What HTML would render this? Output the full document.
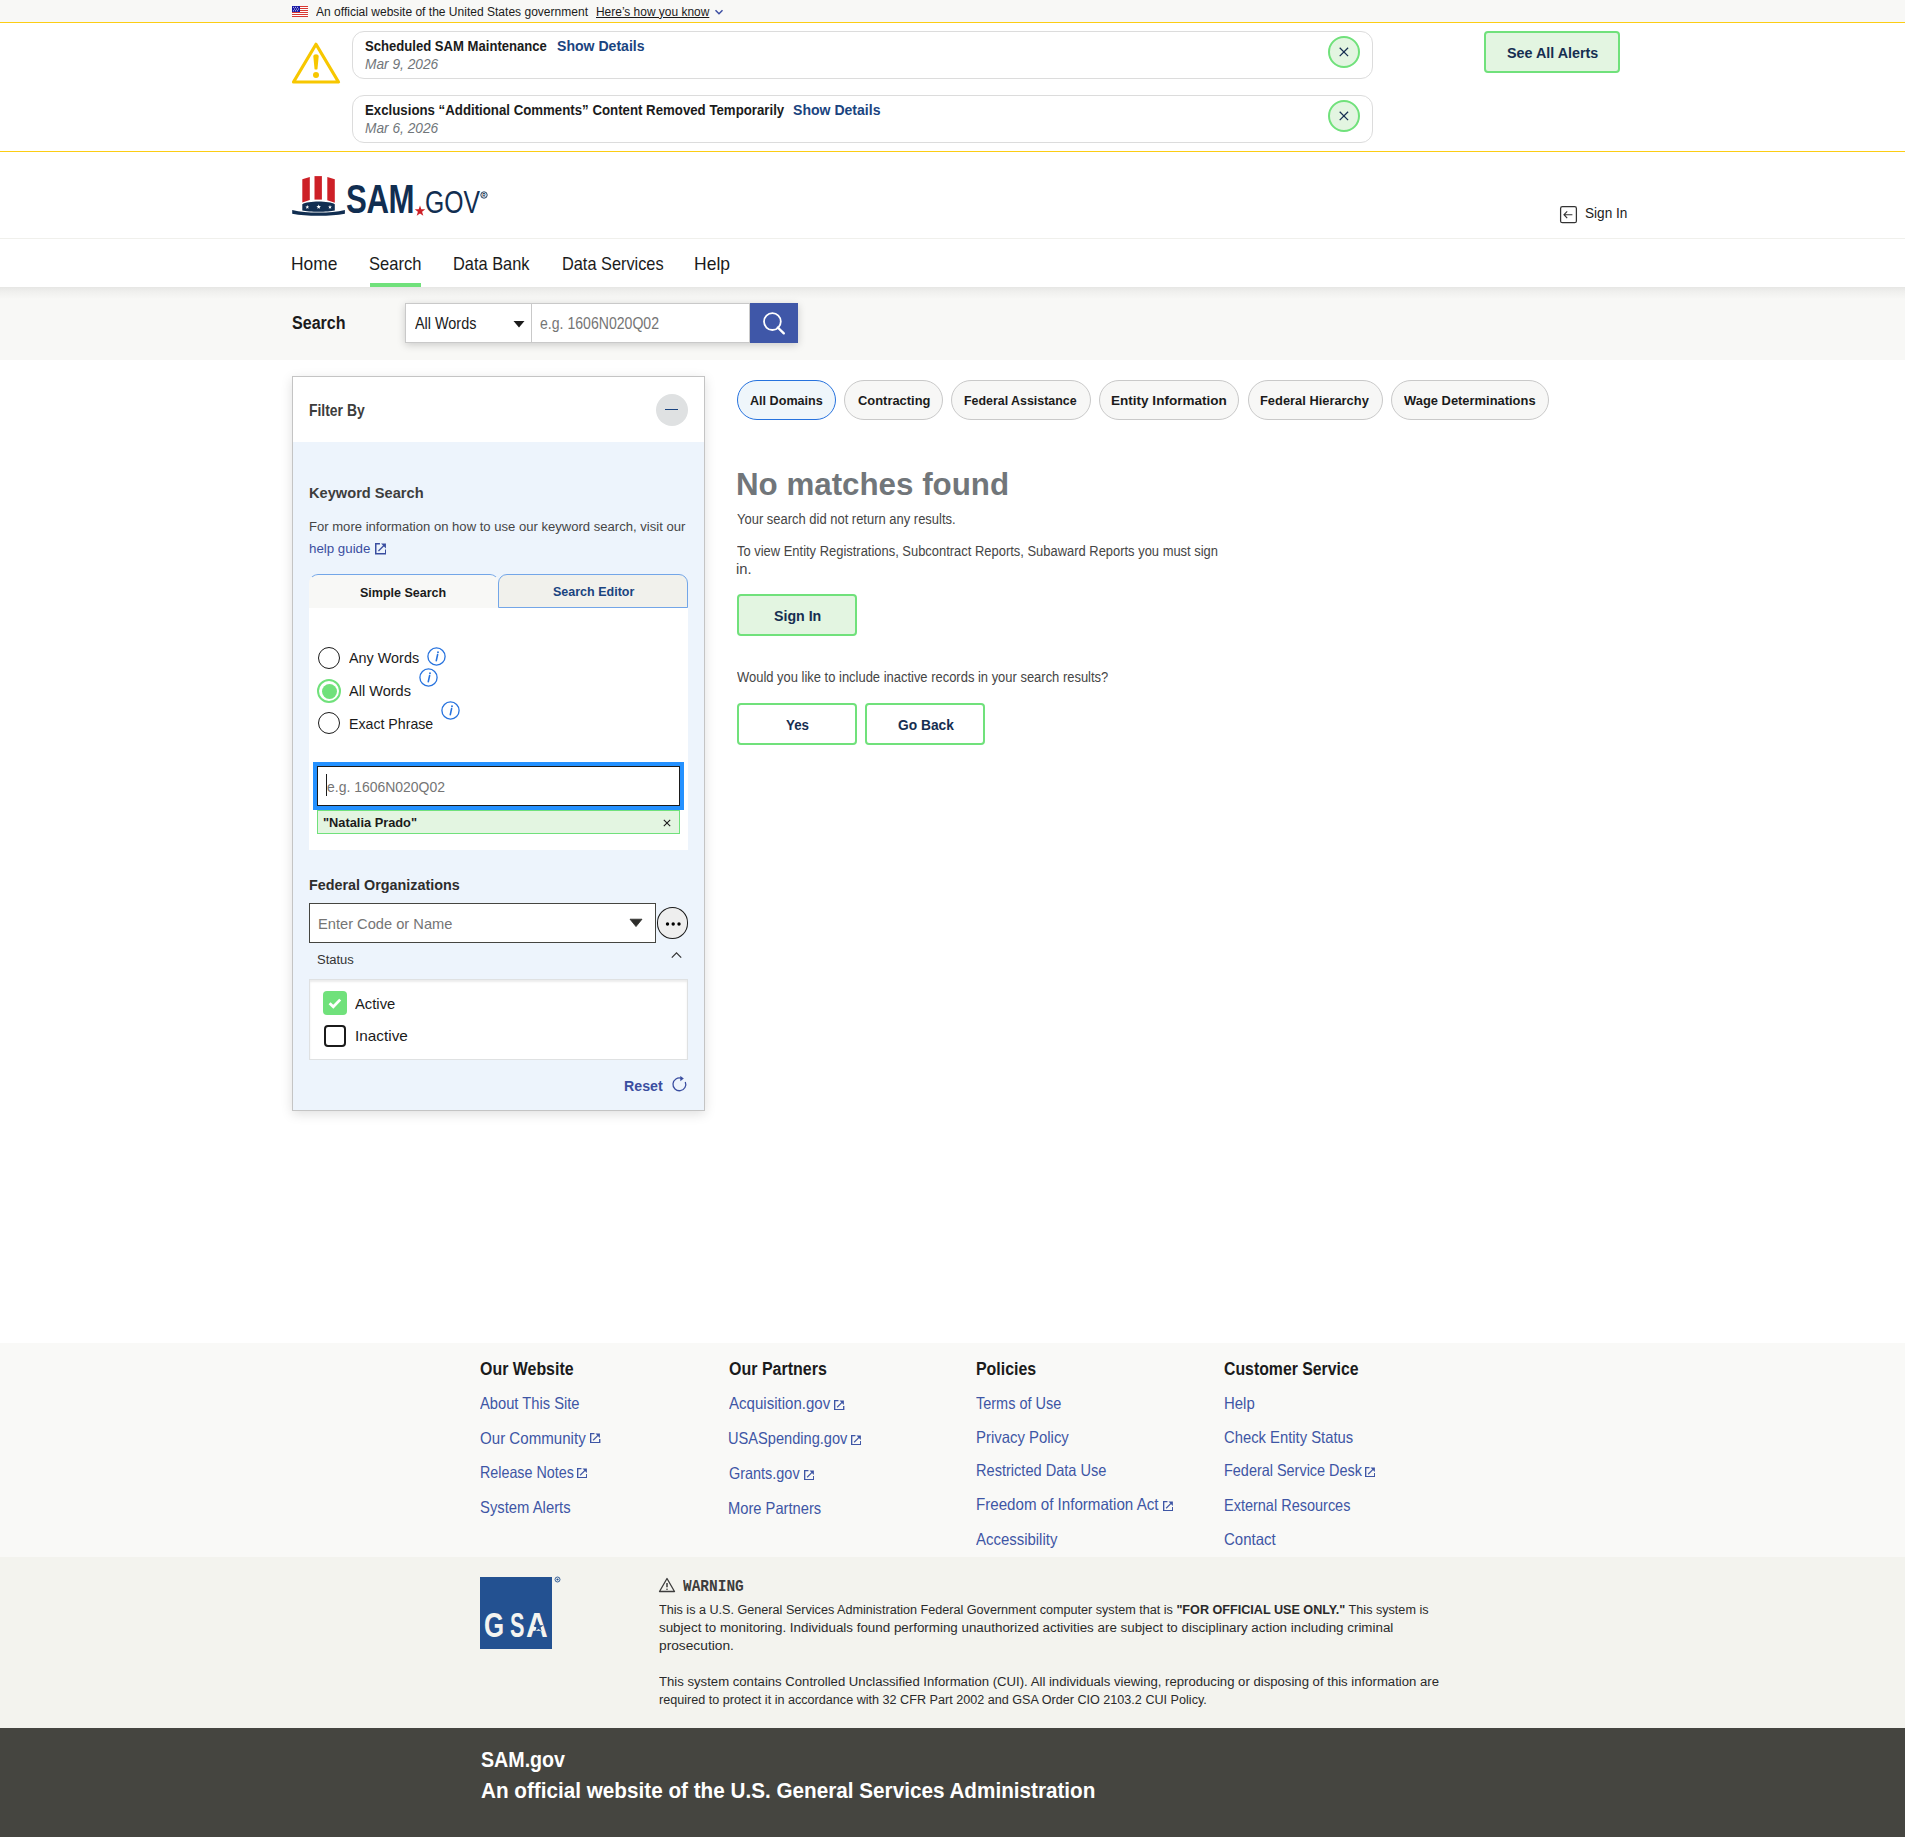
<!DOCTYPE html>
<html><head><meta charset="utf-8"><title>SAM.gov Search</title>
<style>
html,body{margin:0;padding:0;background:#fff;}
body{width:1905px;height:1837px;position:relative;overflow:hidden;font-family:"Liberation Sans",sans-serif;}
.a{position:absolute;}
.t{position:absolute;white-space:nowrap;transform-origin:0 0;}
.t b{font-weight:700;}
</style></head><body>
<div class="a" style="left:0px;top:0px;width:1905px;height:22px;box-sizing:border-box;background:#f8f8f6"></div>
<div class="a" style="left:0px;top:22px;width:1905px;height:1px;box-sizing:border-box;background:#fccd14"></div>
<div class="a" style="left:0px;top:151px;width:1905px;height:1px;box-sizing:border-box;background:#fccd14"></div>
<svg class="a" style="left:292px;top:6px" width="16" height="11" viewBox="0 0 16 11"><rect width="16" height="11" fill="#fff"/><rect y="0" width="16" height="1" fill="#d83933"/><rect y="2" width="16" height="1" fill="#d83933"/><rect y="4" width="16" height="1" fill="#d83933"/><rect y="6" width="16" height="1" fill="#d83933"/><rect y="8" width="16" height="1" fill="#d83933"/><rect y="10" width="16" height="1" fill="#d83933"/><rect width="8" height="6" fill="#1a1aa6"/><g fill="#fff"><circle cx="1.5" cy="1.3" r=".5"/><circle cx="3.5" cy="1.3" r=".5"/><circle cx="5.5" cy="1.3" r=".5"/><circle cx="2.5" cy="3" r=".5"/><circle cx="4.5" cy="3" r=".5"/><circle cx="6.5" cy="3" r=".5"/><circle cx="1.5" cy="4.7" r=".5"/><circle cx="3.5" cy="4.7" r=".5"/><circle cx="5.5" cy="4.7" r=".5"/></g></svg>
<svg class="a" style="left:714px;top:8px" width="10" height="8" viewBox="0 0 10 8"><path d="M1.5 2.2L5 5.7L8.5 2.2" fill="none" stroke="#3d4fa3" stroke-width="1.5"/></svg>
<svg class="a" style="left:290px;top:40px" width="52" height="46" viewBox="0 0 52 46"><path d="M26 4.3 L48.5 42 H3.5 Z" fill="none" stroke="#f7c700" stroke-width="3.2" stroke-linejoin="round"/><path d="M23.3 16.3 C23.3 13.4 28.7 13.4 28.7 16.3 L27.5 28.7 C27.4 29.9 24.6 29.9 24.5 28.7 Z" fill="#f7c700"/><circle cx="26" cy="35" r="3" fill="#f7c700"/></svg>
<div class="a" style="left:352px;top:31px;width:1021px;height:48px;box-sizing:border-box;border:1px solid #dcdcdc;border-radius:12px;background:#fff"></div>
<div class="a" style="left:352px;top:95px;width:1021px;height:48px;box-sizing:border-box;border:1px solid #dcdcdc;border-radius:12px;background:#fff"></div>
<div class="a" style="left:1328px;top:35.7px;width:28px;height:28px;border:2px solid #70e17b;border-radius:50%;background:#e3f5e1"></div><svg class="a" style="left:1338px;top:45.7px" width="12" height="12" viewBox="0 0 12 12"><path d="M1.7 1.7L10.1 10.1M10.1 1.7L1.7 10.1" stroke="#162e51" stroke-width="1.25"/></svg>
<div class="a" style="left:1328px;top:99.7px;width:28px;height:28px;border:2px solid #70e17b;border-radius:50%;background:#e3f5e1"></div><svg class="a" style="left:1338px;top:109.7px" width="12" height="12" viewBox="0 0 12 12"><path d="M1.7 1.7L10.1 10.1M10.1 1.7L1.7 10.1" stroke="#162e51" stroke-width="1.25"/></svg>
<div class="a" style="left:1484px;top:31px;width:136px;height:42px;box-sizing:border-box;border:2px solid #70e17b;border-radius:4px;background:#e3f5e1"></div>
<svg class="a" style="left:288px;top:172px" width="62" height="48" viewBox="288 172 62 48"><path d="M302.3 179.2 L309.8 176.9 L309.8 200 L302.3 202.5 Z" fill="#cd2027"/><path d="M314.5 176.1 H321.9 V199.6 H314.5 Z" fill="#cd2027"/><path d="M327.3 177.1 L334.8 179.2 L334.8 202.8 L327.3 200.2 Z" fill="#cd2027"/><path d="M302.3 210.5 V204.2 C308 200.6 329 200.6 334.8 204.2 V210.5 C328 212.2 309 212.2 302.3 210.5 Z" fill="#112e51"/><path d="M292.2 209.9 C300 211.6 308 212.6 318.5 212.6 C329 212.6 337 211.6 344.9 209.9 V213.7 C337 215 329 215.8 318.5 215.8 C308 215.8 300 215 292.2 213.7 Z" fill="#112e51"/><g fill="#fff"><path d="M307.30 205.00 L307.82 206.39 L309.30 206.45 L308.14 207.37 L308.53 208.80 L307.30 207.98 L306.07 208.80 L306.46 207.37 L305.30 206.45 L306.78 206.39 Z"/><path d="M318.70 204.50 L319.29 206.08 L320.98 206.16 L319.66 207.21 L320.11 208.84 L318.70 207.91 L317.29 208.84 L317.74 207.21 L316.42 206.16 L318.11 206.08 Z"/><path d="M330.00 205.00 L330.52 206.39 L332.00 206.45 L330.84 207.37 L331.23 208.80 L330.00 207.98 L328.77 208.80 L329.16 207.37 L328.00 206.45 L329.48 206.39 Z"/></g></svg>
<div class="a" style="left:346px;top:179px;font:700 40px/40px 'Liberation Sans',sans-serif;color:#112e51;transform-origin:0 0;transform:scaleX(0.78);letter-spacing:-0.5px">SAM</div>
<svg class="a" style="left:414px;top:205px" width="12" height="12" viewBox="0 0 12 12"><path d="M6 0.5 L7.3 4.3 L11.3 4.3 L8.1 6.8 L9.3 10.8 L6 8.4 L2.7 10.8 L3.9 6.8 L0.7 4.3 L4.7 4.3 Z" fill="#cd2027"/></svg>
<div class="a" style="left:425px;top:187px;font:400 31.3px/31.3px 'Liberation Sans',sans-serif;color:#112e51;transform-origin:0 0;transform:scaleX(0.79)">GOV</div>
<svg class="a" style="left:479.5px;top:191px" width="8" height="8" viewBox="0 0 8 8"><circle cx="4" cy="4" r="3.2" fill="none" stroke="#112e51" stroke-width="0.9"/><text x="4" y="5.6" font-size="4.6" text-anchor="middle" font-family="Liberation Sans" font-weight="700" fill="#112e51">R</text></svg>
<svg class="a" style="left:1559px;top:205px" width="19" height="19" viewBox="0 0 19 19"><rect x="1.6" y="1.7" width="15.8" height="16" rx="1.8" fill="none" stroke="#333" stroke-width="1.25"/><path d="M13.4 9.7 H5.2 M8.2 6.3 L5 9.7 L8.2 13.1" fill="none" stroke="#333" stroke-width="1.15"/></svg>
<div class="a" style="left:0px;top:238px;width:1905px;height:1px;box-sizing:border-box;background:#f0f0ec"></div>
<div class="a" style="left:370px;top:283px;width:51px;height:4px;box-sizing:border-box;background:#70e17b"></div>
<div class="a" style="left:0px;top:287px;width:1905px;height:73px;box-sizing:border-box;background:#f8f8f6"></div>
<div class="a" style="left:0px;top:287px;width:1905px;height:12px;box-sizing:border-box;background:linear-gradient(#e6e6e4,#efefed 35%,#f8f8f6)"></div>
<div class="a" style="left:405px;top:303px;width:393px;height:40px;box-sizing:border-box;box-shadow:0 2px 8px rgba(0,0,0,0.18)"></div>
<div class="a" style="left:405px;top:303px;width:127px;height:40px;box-sizing:border-box;background:#fff;border:1px solid #c9c9c9"></div>
<svg class="a" style="left:513px;top:320px" width="12" height="8" viewBox="0 0 12 8"><path d="M0.5 1 H11.5 L6 7.5 Z" fill="#1b1b1b"/></svg>
<div class="a" style="left:532px;top:303px;width:218px;height:40px;box-sizing:border-box;background:#fff;border:1px solid #c9c9c9;border-left:0"></div>
<div class="a" style="left:750px;top:303px;width:48px;height:40px;box-sizing:border-box;background:#3f57a8"></div>
<svg class="a" style="left:760px;top:310px" width="28" height="28" viewBox="760 310 28 28"><circle cx="772.4" cy="321.6" r="8.4" fill="none" stroke="#fff" stroke-width="1.8"/><path d="M777.8 327.5 L783.8 333.3" stroke="#fff" stroke-width="2.4" stroke-linecap="round"/></svg>
<div class="a" style="left:292px;top:376px;width:413px;height:735px;box-sizing:border-box;border:1px solid #c4c4c4;box-shadow:0 3px 11px rgba(0,0,0,0.13);background:#edf4fc"></div>
<div class="a" style="left:293px;top:377px;width:411px;height:65px;box-sizing:border-box;background:#fff"></div>
<div class="a" style="left:655.5px;top:393.5px;width:32.0px;height:32.0px;box-sizing:border-box;background:#dfe1e2;border-radius:50%"></div>
<div class="a" style="left:665px;top:408.8px;width:13px;height:1.3000000000000114px;box-sizing:border-box;background:#1a4480"></div>
<svg class="a" style="left:374.8px;top:543.2px" width="11.5" height="11.5" viewBox="0 0 10 10"><path d="M4.3 0.65 H0.65 V9.35 H9.35 V5.7" fill="none" stroke="#3a4ea0" stroke-width="1.3"/><path d="M3 7 L8.2 1.8" stroke="#3a4ea0" stroke-width="1.1"/><path d="M5.3 0.5 H9.5 V4.7 Z" fill="#3a4ea0"/></svg>
<div class="a" style="left:309px;top:574px;width:190px;height:34px;box-sizing:border-box;background:#f8f8f6;border:1px solid transparent;border-top-color:#73a6e8;border-bottom:0;border-radius:9px 9px 0 0"></div>
<div class="a" style="left:498px;top:574px;width:190px;height:34px;box-sizing:border-box;background:#f1f1ec;border:1px solid #73a6e8;border-radius:9px 9px 0 0"></div>
<div class="a" style="left:309px;top:608px;width:379px;height:241.5px;box-sizing:border-box;background:#fff"></div>
<div class="a" style="left:318px;top:647px;width:22px;height:22px;box-sizing:border-box;border:1.6px solid #1b1b1b;border-radius:50%;background:#fff"></div>
<div class="a" style="left:317px;top:679px;width:24px;height:24px;box-sizing:border-box;border:2.2px solid #70e17b;border-radius:50%;background:#fff"></div>
<div class="a" style="left:321.5px;top:683.5px;width:15.0px;height:15.0px;box-sizing:border-box;border-radius:50%;background:#70e17b"></div>
<div class="a" style="left:318px;top:712px;width:22px;height:22px;box-sizing:border-box;border:1.6px solid #1b1b1b;border-radius:50%;background:#fff"></div>
<svg class="a" style="left:426.6px;top:646.7px" width="19" height="19" viewBox="0 0 19 19"><circle cx="9.5" cy="9.5" r="8.6" fill="none" stroke="#2672de" stroke-width="1.3"/><path d="M10.6 7.6 L9.3 13.6" stroke="#2672de" stroke-width="1.6" stroke-linecap="round"/><circle cx="11" cy="5.2" r="0.95" fill="#2672de"/></svg>
<svg class="a" style="left:418.5px;top:667.8px" width="19" height="19" viewBox="0 0 19 19"><circle cx="9.5" cy="9.5" r="8.6" fill="none" stroke="#2672de" stroke-width="1.3"/><path d="M10.6 7.6 L9.3 13.6" stroke="#2672de" stroke-width="1.6" stroke-linecap="round"/><circle cx="11" cy="5.2" r="0.95" fill="#2672de"/></svg>
<svg class="a" style="left:440.6px;top:700.8px" width="19" height="19" viewBox="0 0 19 19"><circle cx="9.5" cy="9.5" r="8.6" fill="none" stroke="#2672de" stroke-width="1.3"/><path d="M10.6 7.6 L9.3 13.6" stroke="#2672de" stroke-width="1.6" stroke-linecap="round"/><circle cx="11" cy="5.2" r="0.95" fill="#2672de"/></svg>
<div class="a" style="left:313px;top:762px;width:371px;height:48px;box-sizing:border-box;background:#2491ff"></div>
<div class="a" style="left:317px;top:766px;width:363px;height:40px;box-sizing:border-box;background:#fff;border:1.5px solid #1b1b1b"></div>
<div class="a" style="left:326px;top:774px;width:1.3000000000000114px;height:22px;box-sizing:border-box;background:#1b1b1b"></div>
<div class="a" style="left:317px;top:810px;width:363px;height:24px;box-sizing:border-box;background:#e3f5e1;border:1px solid #70e17b"></div>
<svg class="a" style="left:661.5px;top:817.5px" width="10" height="10" viewBox="0 0 10 10"><path d="M1.8 1.8L8.2 8.2M8.2 1.8L1.8 8.2" stroke="#1b1b1b" stroke-width="1.1"/></svg>
<div class="a" style="left:309px;top:903px;width:347px;height:40px;box-sizing:border-box;background:#fff;border:1.4px solid #454540"></div>
<svg class="a" style="left:629px;top:918px" width="14" height="10" viewBox="0 0 14 10"><path d="M1 1.2 H13 L7 8.6 Z" fill="#2d2d2a" stroke="#2d2d2a" stroke-width="0.8" stroke-linejoin="round"/></svg>
<div class="a" style="left:656.5px;top:907px;width:31.5px;height:31.700000000000045px;box-sizing:border-box;background:#eee;border:1.8px solid #1b1b1b;border-radius:50%"></div>
<svg class="a" style="left:662px;top:920px" width="22" height="8" viewBox="0 0 22 8"><circle cx="5.5" cy="4" r="1.7" fill="#000"/><circle cx="11.2" cy="4" r="1.7" fill="#000"/><circle cx="17" cy="4" r="1.7" fill="#000"/></svg>
<svg class="a" style="left:670px;top:950px" width="13" height="10" viewBox="0 0 13 10"><path d="M1.8 7.7 L6.5 2.8 L11.2 7.7" fill="none" stroke="#333" stroke-width="1.2"/></svg>
<div class="a" style="left:309px;top:979px;width:379px;height:81px;box-sizing:border-box;background:#fff;border:1px solid #dfe1e2;box-shadow:inset 0 2px 2px rgba(0,0,0,0.08)"></div>
<div class="a" style="left:323px;top:991px;width:24px;height:24px;box-sizing:border-box;background:#70e17b;border-radius:4px"></div>
<svg class="a" style="left:323px;top:991px" width="24" height="24" viewBox="0 0 24 24"><path d="M6.6 12.2 L10.3 15.8 L17.2 8.6" fill="none" stroke="#fff" stroke-width="2.8"/></svg>
<div class="a" style="left:324px;top:1025px;width:22px;height:22px;box-sizing:border-box;background:#fff;border:2px solid #1b1b1b;border-radius:4px"></div>
<svg class="a" style="left:671px;top:1076px" width="18" height="18" viewBox="671 1076 18 18"><path d="M685.3 1081.9 A6.4 6.4 0 1 1 681.5 1078.3" fill="none" stroke="#3a4ea0" stroke-width="1.3"/><path d="M680.3 1075.9 L683.8 1078.6 L680.3 1081.3 Z" fill="#3a4ea0"/></svg>
<div class="a" style="left:737.2px;top:380px;width:98.5px;height:39.5px;box-sizing:border-box;background:#eff6fb;border:1.3px solid #2672de;border-radius:20px"></div>
<div class="a" style="left:844.1px;top:380px;width:98.60000000000002px;height:39.5px;box-sizing:border-box;background:#f7f7f6;border:1px solid #c9c9c9;border-radius:20px"></div>
<div class="a" style="left:951.2px;top:380px;width:139.39999999999986px;height:39.5px;box-sizing:border-box;background:#f7f7f6;border:1px solid #c9c9c9;border-radius:20px"></div>
<div class="a" style="left:1099px;top:380px;width:139.79999999999995px;height:39.5px;box-sizing:border-box;background:#f7f7f6;border:1px solid #c9c9c9;border-radius:20px"></div>
<div class="a" style="left:1247.6px;top:380px;width:135.0px;height:39.5px;box-sizing:border-box;background:#f7f7f6;border:1px solid #c9c9c9;border-radius:20px"></div>
<div class="a" style="left:1391.4px;top:380px;width:157.39999999999986px;height:39.5px;box-sizing:border-box;background:#f7f7f6;border:1px solid #c9c9c9;border-radius:20px"></div>
<div class="a" style="left:737px;top:594px;width:120px;height:42px;box-sizing:border-box;background:#e3f5e1;border:2px solid #70e17b;border-radius:4px"></div>
<div class="a" style="left:737px;top:703px;width:120px;height:42px;box-sizing:border-box;background:#fff;border:2px solid #70e17b;border-radius:4px"></div>
<div class="a" style="left:865px;top:703px;width:120px;height:42px;box-sizing:border-box;background:#fff;border:2px solid #70e17b;border-radius:4px"></div>
<div class="a" style="left:0px;top:1343px;width:1905px;height:214px;box-sizing:border-box;background:#f9f9f7"></div>
<svg class="a" style="left:590.4px;top:1433px" width="10.4" height="10.4" viewBox="0 0 10 10"><path d="M4.3 0.65 H0.65 V9.35 H9.35 V5.7" fill="none" stroke="#3e56a5" stroke-width="1.3"/><path d="M3 7 L8.2 1.8" stroke="#3e56a5" stroke-width="1.1"/><path d="M5.3 0.5 H9.5 V4.7 Z" fill="#3e56a5"/></svg>
<svg class="a" style="left:576.6px;top:1468px" width="10.4" height="10.4" viewBox="0 0 10 10"><path d="M4.3 0.65 H0.65 V9.35 H9.35 V5.7" fill="none" stroke="#3e56a5" stroke-width="1.3"/><path d="M3 7 L8.2 1.8" stroke="#3e56a5" stroke-width="1.1"/><path d="M5.3 0.5 H9.5 V4.7 Z" fill="#3e56a5"/></svg>
<svg class="a" style="left:834.4px;top:1399.9px" width="10.4" height="10.4" viewBox="0 0 10 10"><path d="M4.3 0.65 H0.65 V9.35 H9.35 V5.7" fill="none" stroke="#3e56a5" stroke-width="1.3"/><path d="M3 7 L8.2 1.8" stroke="#3e56a5" stroke-width="1.1"/><path d="M5.3 0.5 H9.5 V4.7 Z" fill="#3e56a5"/></svg>
<svg class="a" style="left:850.9px;top:1434.8px" width="10.4" height="10.4" viewBox="0 0 10 10"><path d="M4.3 0.65 H0.65 V9.35 H9.35 V5.7" fill="none" stroke="#3e56a5" stroke-width="1.3"/><path d="M3 7 L8.2 1.8" stroke="#3e56a5" stroke-width="1.1"/><path d="M5.3 0.5 H9.5 V4.7 Z" fill="#3e56a5"/></svg>
<svg class="a" style="left:803.5px;top:1469.8px" width="10.4" height="10.4" viewBox="0 0 10 10"><path d="M4.3 0.65 H0.65 V9.35 H9.35 V5.7" fill="none" stroke="#3e56a5" stroke-width="1.3"/><path d="M3 7 L8.2 1.8" stroke="#3e56a5" stroke-width="1.1"/><path d="M5.3 0.5 H9.5 V4.7 Z" fill="#3e56a5"/></svg>
<svg class="a" style="left:1162.6px;top:1500.6px" width="10.4" height="10.4" viewBox="0 0 10 10"><path d="M4.3 0.65 H0.65 V9.35 H9.35 V5.7" fill="none" stroke="#3e56a5" stroke-width="1.3"/><path d="M3 7 L8.2 1.8" stroke="#3e56a5" stroke-width="1.1"/><path d="M5.3 0.5 H9.5 V4.7 Z" fill="#3e56a5"/></svg>
<svg class="a" style="left:1364.7px;top:1467px" width="10.4" height="10.4" viewBox="0 0 10 10"><path d="M4.3 0.65 H0.65 V9.35 H9.35 V5.7" fill="none" stroke="#3e56a5" stroke-width="1.3"/><path d="M3 7 L8.2 1.8" stroke="#3e56a5" stroke-width="1.1"/><path d="M5.3 0.5 H9.5 V4.7 Z" fill="#3e56a5"/></svg>
<div class="a" style="left:0px;top:1557px;width:1905px;height:171px;box-sizing:border-box;background:#f3f3ee"></div>
<div class="a" style="left:480px;top:1577px;width:72px;height:72px;box-sizing:border-box;background:#235191"></div>
<div class="a" style="left:484px;top:1607px;font:700 35px/35px 'Liberation Sans',sans-serif;color:#f4f4f0;transform-origin:0 0;transform:scaleX(0.74)">G</div>
<div class="a" style="left:509.5px;top:1607px;font:700 35px/35px 'Liberation Sans',sans-serif;color:#f4f4f0;transform-origin:0 0;transform:scaleX(0.62)">S</div>
<div class="a" style="left:525.5px;top:1607px;font:700 35px/35px 'Liberation Sans',sans-serif;color:#f4f4f0;transform-origin:0 0;transform:scaleX(0.86)">A</div>
<svg class="a" style="left:532.5px;top:1620.5px" width="11" height="11" viewBox="0 0 10 10"><path d="M5 0.5 L6.2 3.8 L9.6 3.8 L6.9 5.9 L7.9 9.3 L5 7.2 L2.1 9.3 L3.1 5.9 L0.4 3.8 L3.8 3.8 Z" fill="#235191"/></svg>
<svg class="a" style="left:554px;top:1576px" width="7" height="7" viewBox="0 0 7 7"><circle cx="3.5" cy="3.5" r="2.5" fill="none" stroke="#235191" stroke-width="0.9"/><circle cx="3.5" cy="3.5" r="1.1" fill="#235191"/></svg>
<svg class="a" style="left:658px;top:1577px" width="18" height="16" viewBox="0 0 18 16"><path d="M9 1.5 L16.5 14.5 H1.5 Z" fill="none" stroke="#3d3d3d" stroke-width="1.3" stroke-linejoin="round"/><path d="M9 6 V10.2" stroke="#3d3d3d" stroke-width="1.5"/><circle cx="9" cy="12.3" r=".8" fill="#3d3d3d"/></svg>
<div class="a" style="left:0px;top:1728px;width:1905px;height:109px;box-sizing:border-box;background:#454540"></div>
<div class="t" id="t0" style="left:316.00px;top:4.63px;font-size:13.08px;line-height:13.08px;font-family:'Liberation Sans', sans-serif;font-weight:400;color:#1b1b1b;transform:scaleX(0.9200);">An official website of the United States government</div>
<div class="t" id="t1" style="left:595.60px;top:4.63px;font-size:13.08px;line-height:13.08px;font-family:'Liberation Sans', sans-serif;font-weight:400;color:#1b1b1b;transform:scaleX(0.9131);text-decoration:underline;text-underline-offset:1px;">Here’s how you know</div>
<div class="t" id="t2" style="left:364.60px;top:39.40px;font-size:14.53px;line-height:14.53px;font-family:'Liberation Sans', sans-serif;font-weight:700;color:#1b1b1b;transform:scaleX(0.9020);">Scheduled SAM Maintenance</div>
<div class="t" id="t3" style="left:556.60px;top:39.40px;font-size:14.53px;line-height:14.53px;font-family:'Liberation Sans', sans-serif;font-weight:700;color:#1a4480;transform:scaleX(0.9696);">Show Details</div>
<div class="t" id="t4" style="left:364.60px;top:57.30px;font-size:14.53px;line-height:14.53px;font-family:'Liberation Sans', sans-serif;font-weight:400;color:#71767a;font-style:italic;transform:scaleX(0.9449);">Mar 9, 2026</div>
<div class="t" id="t5" style="left:364.60px;top:102.70px;font-size:14.53px;line-height:14.53px;font-family:'Liberation Sans', sans-serif;font-weight:700;color:#1b1b1b;transform:scaleX(0.9124);">Exclusions “Additional Comments” Content Removed Temporarily</div>
<div class="t" id="t6" style="left:792.90px;top:102.70px;font-size:14.53px;line-height:14.53px;font-family:'Liberation Sans', sans-serif;font-weight:700;color:#1a4480;transform:scaleX(0.9685);">Show Details</div>
<div class="t" id="t7" style="left:364.60px;top:121.30px;font-size:14.53px;line-height:14.53px;font-family:'Liberation Sans', sans-serif;font-weight:400;color:#71767a;font-style:italic;transform:scaleX(0.9449);">Mar 6, 2026</div>
<div class="t" id="t8" style="left:1506.60px;top:46.00px;font-size:14.53px;line-height:14.53px;font-family:'Liberation Sans', sans-serif;font-weight:700;color:#162e51;transform:scaleX(0.9869);">See All Alerts</div>
<div class="t" id="t9" style="left:1585.00px;top:205.50px;font-size:14.53px;line-height:14.53px;font-family:'Liberation Sans', sans-serif;font-weight:400;color:#1b1b1b;transform:scaleX(0.9388);">Sign In</div>
<div class="t" id="t10" style="left:291.20px;top:255.00px;font-size:18.31px;line-height:18.31px;font-family:'Liberation Sans', sans-serif;font-weight:400;color:#1b1b1b;transform:scaleX(0.9520);">Home</div>
<div class="t" id="t11" style="left:369.00px;top:255.00px;font-size:18.31px;line-height:18.31px;font-family:'Liberation Sans', sans-serif;font-weight:400;color:#1b1b1b;transform:scaleX(0.9047);">Search</div>
<div class="t" id="t12" style="left:452.60px;top:255.00px;font-size:18.31px;line-height:18.31px;font-family:'Liberation Sans', sans-serif;font-weight:400;color:#1b1b1b;transform:scaleX(0.8954);">Data Bank</div>
<div class="t" id="t13" style="left:561.70px;top:255.00px;font-size:18.31px;line-height:18.31px;font-family:'Liberation Sans', sans-serif;font-weight:400;color:#1b1b1b;transform:scaleX(0.8921);">Data Services</div>
<div class="t" id="t14" style="left:693.50px;top:255.00px;font-size:18.31px;line-height:18.31px;font-family:'Liberation Sans', sans-serif;font-weight:400;color:#1b1b1b;transform:scaleX(0.9572);">Help</div>
<div class="t" id="t15" style="left:292.30px;top:315.24px;font-size:17.44px;line-height:17.44px;font-family:'Liberation Sans', sans-serif;font-weight:700;color:#1b1b1b;transform:scaleX(0.9220);">Search</div>
<div class="t" id="t16" style="left:414.60px;top:315.66px;font-size:15.99px;line-height:15.99px;font-family:'Liberation Sans', sans-serif;font-weight:400;color:#1b1b1b;transform:scaleX(0.9015);">All Words</div>
<div class="t" id="t17" style="left:540.20px;top:315.66px;font-size:15.99px;line-height:15.99px;font-family:'Liberation Sans', sans-serif;font-weight:400;color:#757575;transform:scaleX(0.8809);">e.g. 1606N020Q02</div>
<div class="t" id="t18" style="left:309.40px;top:402.76px;font-size:15.99px;line-height:15.99px;font-family:'Liberation Sans', sans-serif;font-weight:700;color:#3d3d3d;transform:scaleX(0.8707);">Filter By</div>
<div class="t" id="t19" style="left:309.40px;top:485.28px;font-size:15.26px;line-height:15.26px;font-family:'Liberation Sans', sans-serif;font-weight:700;color:#3d3d3d;transform:scaleX(0.9591);">Keyword Search</div>
<div class="t" id="t20" style="left:309.40px;top:519.84px;font-size:13.66px;line-height:13.66px;font-family:'Liberation Sans', sans-serif;font-weight:400;color:#454545;transform:scaleX(0.9571);">For more information on how to use our keyword search, visit our</div>
<div class="t" id="t21" style="left:309.40px;top:541.74px;font-size:13.66px;line-height:13.66px;font-family:'Liberation Sans', sans-serif;font-weight:400;color:#3a4ea0;transform:scaleX(0.9745);">help guide</div>
<div class="t" id="t22" style="left:360.20px;top:586.34px;font-size:13.66px;line-height:13.66px;font-family:'Liberation Sans', sans-serif;font-weight:700;color:#1b1b1b;transform:scaleX(0.9158);">Simple Search</div>
<div class="t" id="t23" style="left:552.50px;top:585.14px;font-size:13.66px;line-height:13.66px;font-family:'Liberation Sans', sans-serif;font-weight:700;color:#1a4480;transform:scaleX(0.9156);">Search Editor</div>
<div class="t" id="t24" style="left:349.00px;top:649.96px;font-size:15.41px;line-height:15.41px;font-family:'Liberation Sans', sans-serif;font-weight:400;color:#1b1b1b;transform:scaleX(0.9339);">Any Words</div>
<div class="t" id="t25" style="left:349.00px;top:682.86px;font-size:15.41px;line-height:15.41px;font-family:'Liberation Sans', sans-serif;font-weight:400;color:#1b1b1b;transform:scaleX(0.9445);">All Words</div>
<div class="t" id="t26" style="left:348.80px;top:715.96px;font-size:15.41px;line-height:15.41px;font-family:'Liberation Sans', sans-serif;font-weight:400;color:#1b1b1b;transform:scaleX(0.9190);">Exact Phrase</div>
<div class="t" id="t27" style="left:326.80px;top:779.72px;font-size:14.39px;line-height:14.39px;font-family:'Liberation Sans', sans-serif;font-weight:400;color:#757575;transform:scaleX(0.9712);">e.g. 1606N020Q02</div>
<div class="t" id="t28" style="left:323.40px;top:815.83px;font-size:13.08px;line-height:13.08px;font-family:'Liberation Sans', sans-serif;font-weight:700;color:#1b1b1b;transform:scaleX(0.9793);">"Natalia Prado"</div>
<div class="t" id="t29" style="left:309.00px;top:877.16px;font-size:15.41px;line-height:15.41px;font-family:'Liberation Sans', sans-serif;font-weight:700;color:#2d2d2d;transform:scaleX(0.9320);">Federal Organizations</div>
<div class="t" id="t30" style="left:318.40px;top:917.33px;font-size:14.97px;line-height:14.97px;font-family:'Liberation Sans', sans-serif;font-weight:400;color:#757575;transform:scaleX(0.9791);">Enter Code or Name</div>
<div class="t" id="t31" style="left:317.30px;top:953.44px;font-size:13.66px;line-height:13.66px;font-family:'Liberation Sans', sans-serif;font-weight:400;color:#333333;transform:scaleX(0.9519);">Status</div>
<div class="t" id="t32" style="left:354.80px;top:995.96px;font-size:15.41px;line-height:15.41px;font-family:'Liberation Sans', sans-serif;font-weight:400;color:#1b1b1b;transform:scaleX(0.9602);">Active</div>
<div class="t" id="t33" style="left:354.70px;top:1027.76px;font-size:15.41px;line-height:15.41px;font-family:'Liberation Sans', sans-serif;font-weight:400;color:#1b1b1b;transform:scaleX(0.9949);">Inactive</div>
<div class="t" id="t34" style="left:623.50px;top:1079.33px;font-size:14.97px;line-height:14.97px;font-family:'Liberation Sans', sans-serif;font-weight:700;color:#3a4ea0;transform:scaleX(0.9477);">Reset</div>
<div class="t" id="t35" style="left:750.20px;top:393.83px;font-size:13.08px;line-height:13.08px;font-family:'Liberation Sans', sans-serif;font-weight:700;color:#1b1b1b;transform:scaleX(0.9632);">All Domains</div>
<div class="t" id="t36" style="left:857.60px;top:393.83px;font-size:13.08px;line-height:13.08px;font-family:'Liberation Sans', sans-serif;font-weight:700;color:#1b1b1b;transform:scaleX(0.9865);">Contracting</div>
<div class="t" id="t37" style="left:964.40px;top:393.83px;font-size:13.08px;line-height:13.08px;font-family:'Liberation Sans', sans-serif;font-weight:700;color:#1b1b1b;transform:scaleX(0.9483);">Federal Assistance</div>
<div class="t" id="t38" style="left:1110.70px;top:393.83px;font-size:13.08px;line-height:13.08px;font-family:'Liberation Sans', sans-serif;font-weight:700;color:#1b1b1b;transform:scaleX(1.0351);">Entity Information</div>
<div class="t" id="t39" style="left:1259.70px;top:393.83px;font-size:13.08px;line-height:13.08px;font-family:'Liberation Sans', sans-serif;font-weight:700;color:#1b1b1b;transform:scaleX(0.9846);">Federal Hierarchy</div>
<div class="t" id="t40" style="left:1403.60px;top:393.83px;font-size:13.08px;line-height:13.08px;font-family:'Liberation Sans', sans-serif;font-weight:700;color:#1b1b1b;transform:scaleX(0.9877);">Wage Determinations</div>
<div class="t" id="t41" style="left:736.00px;top:469.52px;font-size:30.81px;line-height:30.81px;font-family:'Liberation Sans', sans-serif;font-weight:700;color:#71767a;transform:scaleX(1.0164);">No matches found</div>
<div class="t" id="t42" style="left:737.00px;top:513.49px;font-size:13.95px;line-height:13.95px;font-family:'Liberation Sans', sans-serif;font-weight:400;color:#454545;transform:scaleX(0.9302);">Your search did not return any results.</div>
<div class="t" id="t43" style="left:737.00px;top:545.19px;font-size:13.95px;line-height:13.95px;font-family:'Liberation Sans', sans-serif;font-weight:400;color:#454545;transform:scaleX(0.9281);">To view Entity Registrations, Subcontract Reports, Subaward Reports you must sign</div>
<div class="t" id="t44" style="left:736.00px;top:562.59px;font-size:13.95px;line-height:13.95px;font-family:'Liberation Sans', sans-serif;font-weight:400;color:#454545;transform:scaleX(1.0615);">in.</div>
<div class="t" id="t45" style="left:773.70px;top:607.98px;font-size:15.26px;line-height:15.26px;font-family:'Liberation Sans', sans-serif;font-weight:700;color:#162e51;transform:scaleX(0.9303);">Sign In</div>
<div class="t" id="t46" style="left:737.00px;top:670.69px;font-size:13.95px;line-height:13.95px;font-family:'Liberation Sans', sans-serif;font-weight:400;color:#454545;transform:scaleX(0.9294);">Would you like to include inactive records in your search results?</div>
<div class="t" id="t47" style="left:785.80px;top:716.88px;font-size:15.26px;line-height:15.26px;font-family:'Liberation Sans', sans-serif;font-weight:700;color:#162e51;transform:scaleX(0.8746);">Yes</div>
<div class="t" id="t48" style="left:897.50px;top:716.88px;font-size:15.26px;line-height:15.26px;font-family:'Liberation Sans', sans-serif;font-weight:700;color:#162e51;transform:scaleX(0.9034);">Go Back</div>
<div class="t" id="t49" style="left:480.40px;top:1361.14px;font-size:17.44px;line-height:17.44px;font-family:'Liberation Sans', sans-serif;font-weight:700;color:#1b1b1b;transform:scaleX(0.9141);">Our Website</div>
<div class="t" id="t50" style="left:728.70px;top:1361.14px;font-size:17.44px;line-height:17.44px;font-family:'Liberation Sans', sans-serif;font-weight:700;color:#1b1b1b;transform:scaleX(0.9174);">Our Partners</div>
<div class="t" id="t51" style="left:976.20px;top:1361.14px;font-size:17.44px;line-height:17.44px;font-family:'Liberation Sans', sans-serif;font-weight:700;color:#1b1b1b;transform:scaleX(0.9135);">Policies</div>
<div class="t" id="t52" style="left:1224.30px;top:1361.14px;font-size:17.44px;line-height:17.44px;font-family:'Liberation Sans', sans-serif;font-weight:700;color:#1b1b1b;transform:scaleX(0.9076);">Customer Service</div>
<div class="t" id="t53" style="left:480.40px;top:1395.12px;font-size:16.28px;line-height:16.28px;font-family:'Liberation Sans', sans-serif;font-weight:400;color:#3e56a5;transform:scaleX(0.9044);">About This Site</div>
<div class="t" id="t54" style="left:480.40px;top:1429.72px;font-size:16.28px;line-height:16.28px;font-family:'Liberation Sans', sans-serif;font-weight:400;color:#3e56a5;transform:scaleX(0.9281);">Our Community</div>
<div class="t" id="t55" style="left:480.40px;top:1463.52px;font-size:16.28px;line-height:16.28px;font-family:'Liberation Sans', sans-serif;font-weight:400;color:#3e56a5;transform:scaleX(0.8793);">Release Notes</div>
<div class="t" id="t56" style="left:480.40px;top:1499.12px;font-size:16.28px;line-height:16.28px;font-family:'Liberation Sans', sans-serif;font-weight:400;color:#3e56a5;transform:scaleX(0.9113);">System Alerts</div>
<div class="t" id="t57" style="left:728.70px;top:1395.12px;font-size:16.28px;line-height:16.28px;font-family:'Liberation Sans', sans-serif;font-weight:400;color:#3e56a5;transform:scaleX(0.9250);">Acquisition.gov</div>
<div class="t" id="t58" style="left:727.70px;top:1429.52px;font-size:16.28px;line-height:16.28px;font-family:'Liberation Sans', sans-serif;font-weight:400;color:#3e56a5;transform:scaleX(0.8983);">USASpending.gov</div>
<div class="t" id="t59" style="left:728.70px;top:1465.12px;font-size:16.28px;line-height:16.28px;font-family:'Liberation Sans', sans-serif;font-weight:400;color:#3e56a5;transform:scaleX(0.8874);">Grants.gov</div>
<div class="t" id="t60" style="left:727.70px;top:1499.72px;font-size:16.28px;line-height:16.28px;font-family:'Liberation Sans', sans-serif;font-weight:400;color:#3e56a5;transform:scaleX(0.9044);">More Partners</div>
<div class="t" id="t61" style="left:976.20px;top:1395.02px;font-size:16.28px;line-height:16.28px;font-family:'Liberation Sans', sans-serif;font-weight:400;color:#3e56a5;transform:scaleX(0.8903);">Terms of Use</div>
<div class="t" id="t62" style="left:976.20px;top:1429.12px;font-size:16.28px;line-height:16.28px;font-family:'Liberation Sans', sans-serif;font-weight:400;color:#3e56a5;transform:scaleX(0.9168);">Privacy Policy</div>
<div class="t" id="t63" style="left:976.20px;top:1462.22px;font-size:16.28px;line-height:16.28px;font-family:'Liberation Sans', sans-serif;font-weight:400;color:#3e56a5;transform:scaleX(0.8960);">Restricted Data Use</div>
<div class="t" id="t64" style="left:976.20px;top:1496.22px;font-size:16.28px;line-height:16.28px;font-family:'Liberation Sans', sans-serif;font-weight:400;color:#3e56a5;transform:scaleX(0.9302);">Freedom of Information Act</div>
<div class="t" id="t65" style="left:976.20px;top:1530.92px;font-size:16.28px;line-height:16.28px;font-family:'Liberation Sans', sans-serif;font-weight:400;color:#3e56a5;transform:scaleX(0.9188);">Accessibility</div>
<div class="t" id="t66" style="left:1224.30px;top:1395.02px;font-size:16.28px;line-height:16.28px;font-family:'Liberation Sans', sans-serif;font-weight:400;color:#3e56a5;transform:scaleX(0.9177);">Help</div>
<div class="t" id="t67" style="left:1224.30px;top:1429.12px;font-size:16.28px;line-height:16.28px;font-family:'Liberation Sans', sans-serif;font-weight:400;color:#3e56a5;transform:scaleX(0.9103);">Check Entity Status</div>
<div class="t" id="t68" style="left:1224.30px;top:1462.22px;font-size:16.28px;line-height:16.28px;font-family:'Liberation Sans', sans-serif;font-weight:400;color:#3e56a5;transform:scaleX(0.8876);">Federal Service Desk</div>
<div class="t" id="t69" style="left:1224.30px;top:1496.82px;font-size:16.28px;line-height:16.28px;font-family:'Liberation Sans', sans-serif;font-weight:400;color:#3e56a5;transform:scaleX(0.8907);">External Resources</div>
<div class="t" id="t70" style="left:1224.30px;top:1530.92px;font-size:16.28px;line-height:16.28px;font-family:'Liberation Sans', sans-serif;font-weight:400;color:#3e56a5;transform:scaleX(0.9222);">Contact</div>
<div class="t" id="t71" style="left:683.10px;top:1578.87px;font-size:16.09px;line-height:16.09px;font-family:'Liberation Mono', monospace;font-weight:700;color:#3d3d3d;transform:scaleX(0.9003);">WARNING</div>
<div class="t" id="t72" style="left:659.00px;top:1603.23px;font-size:13.08px;line-height:13.08px;font-family:'Liberation Sans', sans-serif;font-weight:400;color:#2a2a2a;transform:scaleX(0.9645);">This is a U.S. General Services Administration Federal Government computer system that is <b>"FOR OFFICIAL USE ONLY."</b> This system is</div>
<div class="t" id="t73" style="left:659.00px;top:1621.13px;font-size:13.08px;line-height:13.08px;font-family:'Liberation Sans', sans-serif;font-weight:400;color:#2a2a2a;transform:scaleX(1.0224);">subject to monitoring. Individuals found performing unauthorized activities are subject to disciplinary action including criminal</div>
<div class="t" id="t74" style="left:659.00px;top:1638.93px;font-size:13.08px;line-height:13.08px;font-family:'Liberation Sans', sans-serif;font-weight:400;color:#2a2a2a;transform:scaleX(1.0505);">prosecution.</div>
<div class="t" id="t75" style="left:659.00px;top:1675.33px;font-size:13.08px;line-height:13.08px;font-family:'Liberation Sans', sans-serif;font-weight:400;color:#2a2a2a;transform:scaleX(1.0047);">This system contains Controlled Unclassified Information (CUI). All individuals viewing, reproducing or disposing of this information are</div>
<div class="t" id="t76" style="left:659.00px;top:1693.13px;font-size:13.08px;line-height:13.08px;font-family:'Liberation Sans', sans-serif;font-weight:400;color:#2a2a2a;transform:scaleX(0.9641);">required to protect it in accordance with 32 CFR Part 2002 and GSA Order CIO 2103.2 CUI Policy.</div>
<div class="t" id="t77" style="left:480.80px;top:1749.06px;font-size:22.38px;line-height:22.38px;font-family:'Liberation Sans', sans-serif;font-weight:700;color:#ffffff;transform:scaleX(0.8776);">SAM.gov</div>
<div class="t" id="t78" style="left:480.80px;top:1779.41px;font-size:22.67px;line-height:22.67px;font-family:'Liberation Sans', sans-serif;font-weight:700;color:#ffffff;transform:scaleX(0.9133);">An official website of the U.S. General Services Administration</div>
</body></html>
